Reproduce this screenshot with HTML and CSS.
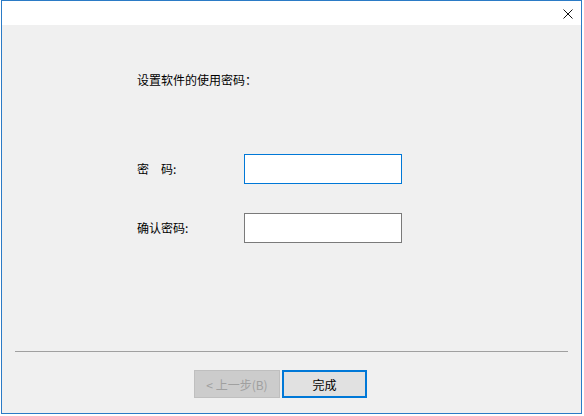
FILE: index.html
```html
<!DOCTYPE html>
<html lang="zh-CN">
<head>
<meta charset="utf-8">
<title>设置密码</title>
<link rel="stylesheet" href="styles.css">
</head>
<body>
<div class="window">
  <div class="titlebar">
    <button class="close" type="button" aria-label="关闭">
      <svg width="10" height="10" viewBox="0 0 10 10"><path d="M0.5 0.5L9.5 9.5M9.5 0.5L0.5 9.5" stroke="#111" stroke-width="1" fill="none"/></svg>
    </button>
  </div>
  <div class="content">
    <div class="main">
      <p class="intro">设置软件的使用密码：</p>
      <div class="form">
        <label class="label" for="pw">密&emsp;码:</label>
        <input class="field focused" id="pw" type="password">
        <label class="label" for="pw2">确认密码:</label>
        <input class="field" id="pw2" type="password">
      </div>
    </div>
    <hr class="sep">
    <div class="buttons">
      <button class="btn disabled" type="button" disabled>&lt; 上一步(B)</button>
      <button class="btn primary" type="button">完成</button>
    </div>
  </div>
</div>
</body>
</html>
```
FILE: styles.css
```css
html, body {
  margin: 0;
  padding: 0;
  background: #ffffff;
}

body {
  font-family: "Noto Sans CJK SC", "Microsoft YaHei", sans-serif;
  font-size: 12px;
  color: #000;
}

.window {
  margin-left: 1px;
  width: 581px;
  height: 414px;
  box-sizing: border-box;
  border: 1px solid #2b7bc6;
  display: flex;
  flex-direction: column;
  background: #f0f0f0;
}

.titlebar {
  height: 24px;
  background: #ffffff;
  display: flex;
  justify-content: flex-end;
  align-items: flex-start;
  flex: none;
}

.close {
  border: 0;
  background: transparent;
  padding: 0;
  margin: 8px 8px 0 0;
  width: 10px;
  height: 10px;
  display: flex;
}

.content {
  flex: 1;
  display: flex;
  flex-direction: column;
}

.main {
  flex: 1;
  padding: 47px 0 0 135px;
}

.intro {
  margin: 0;
  line-height: 16px;
  height: 16px;
}

.form {
  margin-top: 66px;
  display: grid;
  grid-template-columns: 107px 158px;
  row-gap: 29px;
  align-items: center;
}

.label {
  line-height: 16px;
}

.field {
  box-sizing: border-box;
  width: 158px;
  height: 30px;
  margin: 0;
  border: 1px solid #7a7a7a;
  background: #ffffff;
  outline: none;
  font: inherit;
  padding: 0 4px;
}

.field.focused {
  border-color: #0078d7;
}

.sep {
  margin: 0 13px 0 13px;
  border: 0;
  border-top: 1px solid #a0a0a0;
  height: 0;
}

.buttons {
  display: flex;
  gap: 2px;
  padding: 18px 0 15px 192px;
}

.btn {
  box-sizing: border-box;
  width: 86px;
  height: 28px;
  margin: 0;
  font: inherit;
  font-size: 12px;
  background: #e1e1e1;
  border: 1px solid #adadad;
  padding: 0;
  color: #000;
}

.btn.disabled {
  background: #cccccc;
  border-color: #bfbfbf;
  color: #a0a0a0;
}

.btn.primary {
  border: 2px solid #0078d7;
  width: 85px;
}
```
